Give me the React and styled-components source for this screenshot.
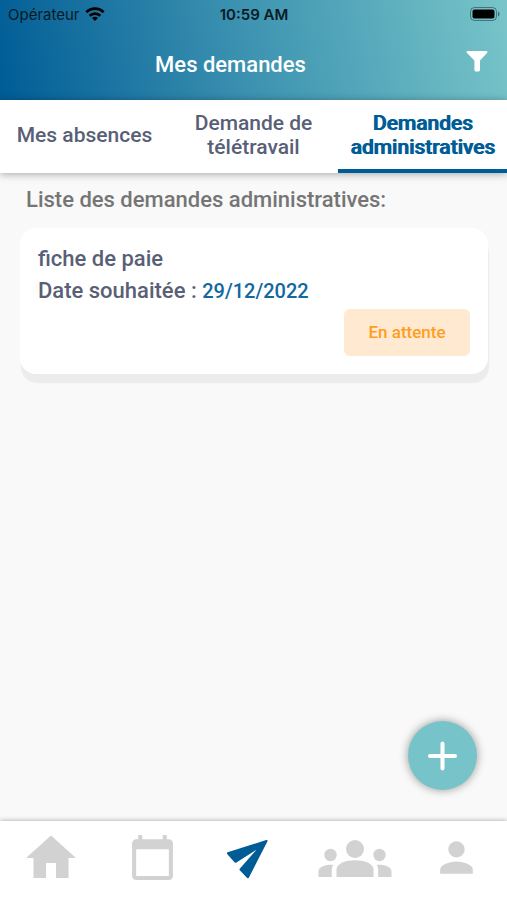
import { useState } from "react";
import styled, { createGlobalStyle } from "styled-components";
import { MdHome, MdCalendarToday, MdPerson } from "react-icons/md";

const GlobalStyle = createGlobalStyle`
  * {
    box-sizing: border-box;
  }

  body {
    margin: 0;
    background: #f9f9f9;
    font-family: Roboto, "Liberation Sans", sans-serif;
  }

  button {
    border: none;
    padding: 0;
    background: none;
    font-family: inherit;
    cursor: pointer;
  }
`;

const Screen = styled.div`
  display: flex;
  flex-direction: column;
  min-height: 100vh;
`;

const Header = styled.header`
  background: linear-gradient(79deg, #005c96 0%, #3e94b1 50%, #78c5c9 100%);
`;

const StatusBar = styled.div`
  display: grid;
  grid-template-columns: 1fr auto 1fr;
  align-items: center;
  height: 28px;
  padding: 0 7px 0 8px;
  font-family: Inter, "Liberation Sans", sans-serif;
  font-size: 15px;
  color: #0a1a24;
`;

const Carrier = styled.span`
  display: flex;
  align-items: center;
  gap: 5px;
`;

const Clock = styled.span`
  font-weight: 600;
`;

const Battery = styled.svg`
  justify-self: end;
`;

const TitleBar = styled.div`
  display: flex;
  align-items: center;
  height: 72px;
  padding-right: 19px;
`;

const PageTitle = styled.h1`
  flex: 1;
  margin: 0;
  font-size: 22px;
  font-weight: 500;
  text-align: center;
  color: #fff;
`;

const FilterButton = styled.button`
  display: flex;
  padding: 0 0 6px 5px;
`;

const Tabs = styled.div`
  display: flex;
  height: 73px;
  background: #fff;
  box-shadow: 0 1px 8px rgba(0, 0, 0, 0.35);
`;

const Tab = styled.button`
  flex: 1 1 0;
  padding: 0 8px;
  border-bottom: 4px solid ${({ $active }) => ($active ? "#005c96" : "transparent")};
  font-size: 21px;
  line-height: 24px;
  font-weight: 500;
  text-shadow: ${({ $active }) => ($active ? "1px 0 #005c96" : "none")};
  color: ${({ $active }) => ($active ? "#005c96" : "#595f76")};
`;

const Content = styled.main`
  flex: 1;
  padding: 13px 19px 0 20px;
`;

const ListTitle = styled.h2`
  margin: 0 0 14px;
  padding-left: 6px;
  font-size: 22px;
  line-height: 28px;
  font-weight: 500;
  color: #757575;
`;

const Card = styled.article`
  display: flex;
  flex-direction: column;
  padding: 15px 18px 18px;
  border-radius: 16px;
  background: #fff;
  box-shadow: 1px 9px 1px #ececec;
`;

const CardLine = styled.p`
  margin: 0;
  font-size: 22px;
  line-height: 32px;
  font-weight: 500;
  color: #595f76;
`;

const DateValue = styled.span`
  font-size: 20px;
  color: #1268a0;
`;

const Status = styled.span`
  align-self: flex-end;
  min-width: 126px;
  margin-top: 2px;
  border-radius: 6px;
  background: #ffe9d0;
  font-size: 17px;
  line-height: 47px;
  font-weight: 500;
  text-align: center;
  color: #ff9d1e;
`;

const AddButton = styled.button`
  position: fixed;
  right: 30px;
  bottom: 110px;
  display: flex;
  align-items: center;
  justify-content: center;
  width: 69px;
  height: 69px;
  border-radius: 50%;
  background: #76c4ca;
  box-shadow: 0 0 10px rgba(0, 0, 0, 0.4);
`;

const BottomNav = styled.nav`
  position: sticky;
  bottom: 0;
  display: flex;
  height: 79px;
  background: #fff;
  box-shadow: 0 0 5px rgba(0, 0, 0, 0.35);
`;

const NavLink = styled.a`
  flex: 1 1 0;
  display: flex;
  align-items: center;
  justify-content: center;
  height: 73px;
  color: ${({ $active }) => ($active ? "#005c96" : "#d2d2d2")};
`;

function WifiIcon() {
  return (
    <svg width="20" height="14" viewBox="0 0 20 14" fill="none" stroke="#000" strokeWidth="2.8">
      <path d="M1.400 5.200C6 .4 14 .4 18.600 5.200" />
      <path d="M4.700 8.700c3-2.900 7.600-2.900 10.600 0" />
      <path d="M10 14 7 11c1.700-1.600 4.300-1.600 6 0z" fill="#000" stroke="none" />
    </svg>
  );
}

function FilterIcon() {
  return (
    <svg width="22" height="22" viewBox="0 0 22 22" fill="#fff">
      <path d="M1.6 1h18.8c1 0 1.4 1 .8 1.7L14 10.500v9.200c0 1.100-.8 1.800-1.800 1.800h-2c-1 0-1.800-.7-1.800-1.800v-9.200L.8 2.700C.2 2 .6 1 1.600 1z" />
    </svg>
  );
}

function PlusIcon() {
  return (
    <svg width="30" height="30" viewBox="0 0 30 30" stroke="#fff" strokeWidth="4" strokeLinecap="round">
      <path d="M14.500 2.500v25M2 15h25" />
    </svg>
  );
}

function PlaneIcon() {
  return (
    <svg width="54" height="42" viewBox="0 0 54 42" fill="currentColor" stroke="currentColor" strokeWidth="2" strokeLinejoin="round">
      <path d="M39.500 4 .900 16.300l7.600 8.500L35 8 13.500 32.500l7.400 7.800z" />
    </svg>
  );
}

function GroupIcon() {
  return (
    <svg width="74" height="40" viewBox="0 0 74 40" fill="currentColor">
      <circle cx="37" cy="11" r="9" />
      <circle cx="12.500" cy="17" r="6.200" />
      <circle cx="61.500" cy="17" r="6.200" />
      <path d="M18.500 39v-7.500C18.500 25.500 28 22.300 37 22.300s18.500 3.200 18.500 9.200V39z" />
      <path d="M.5 39v-5.500c0-5 7-7.300 14.800-6.800-1 1.600-1.500 3.200-1.500 5V39z" />
      <path d="M73.500 39v-5.500c0-5-7-7.300-14.800-6.800 1 1.600 1.500 3.200 1.500 5V39z" />
    </svg>
  );
}

const tabs = ["Mes absences", "Demande de télétravail", "Demandes administratives"];

const requests = [{ label: "fiche de paie", date: "29/12/2022", status: "En attente" }];

const links = [
  { label: "Accueil", href: "#accueil", icon: <MdHome size={60} /> },
  { label: "Calendrier", href: "#calendrier", icon: <MdCalendarToday size={49} /> },
  { label: "Demandes", href: "#demandes", icon: <PlaneIcon />, active: true },
  { label: "Équipe", href: "#equipe", icon: <GroupIcon /> },
  { label: "Profil", href: "#profil", icon: <MdPerson size={49} /> },
];

function App() {
  const [activeTab, setActiveTab] = useState(2);

  return (
    <>
      <GlobalStyle />
      <Screen>
        <Header>
          <StatusBar>
            <Carrier>
              Opérateur
              <WifiIcon />
            </Carrier>
            <Clock>10:59 AM</Clock>
            <Battery width="30" height="14" viewBox="0 0 30 14">
              <rect x=".5" y=".5" width="26" height="13" rx="4" fill="none" stroke="#000" strokeOpacity=".4" />
              <rect x="2.500" y="2.500" width="22" height="9" rx="2" fill="#000" />
              <path d="M28 4.500c2 .8 2 4.200 0 5z" fill="#000" fillOpacity=".45" />
            </Battery>
          </StatusBar>
          <TitleBar>
            <PageTitle>Mes demandes</PageTitle>
            <FilterButton aria-label="Filtrer">
              <FilterIcon />
            </FilterButton>
          </TitleBar>
        </Header>

        <Tabs role="tablist">
          {tabs.map((tab, index) => (
            <Tab
              key={tab}
              role="tab"
              aria-selected={index === activeTab}
              $active={index === activeTab}
              onClick={() => setActiveTab(index)}
            >
              {tab}
            </Tab>
          ))}
        </Tabs>

        <Content>
          <ListTitle>Liste des demandes administratives:</ListTitle>
          {requests.map((request) => (
            <Card key={request.label}>
              <CardLine>{request.label}</CardLine>
              <CardLine>
                Date souhaitée : <DateValue>{request.date}</DateValue>
              </CardLine>
              <Status>{request.status}</Status>
            </Card>
          ))}
        </Content>

        <AddButton aria-label="Ajouter une demande">
          <PlusIcon />
        </AddButton>

        <BottomNav>
          {links.map((link) => (
            <NavLink key={link.label} href={link.href} aria-label={link.label} $active={link.active}>
              {link.icon}
            </NavLink>
          ))}
        </BottomNav>
      </Screen>
    </>
  );
}

export default App;
